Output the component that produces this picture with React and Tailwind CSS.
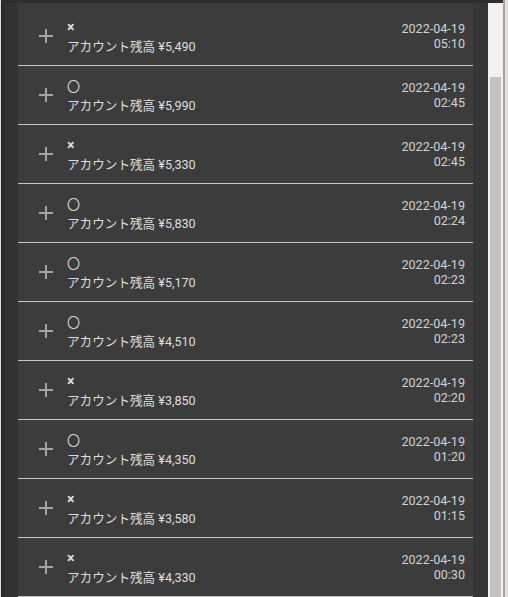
import React from 'react';

const rows = [
  { mark: '×', balance: '5,490', date: '2022-04-19', time: '05:10' },
  { mark: '〇', balance: '5,990', date: '2022-04-19', time: '02:45' },
  { mark: '×', balance: '5,330', date: '2022-04-19', time: '02:45' },
  { mark: '〇', balance: '5,830', date: '2022-04-19', time: '02:24' },
  { mark: '〇', balance: '5,170', date: '2022-04-19', time: '02:23' },
  { mark: '〇', balance: '4,510', date: '2022-04-19', time: '02:23' },
  { mark: '×', balance: '3,850', date: '2022-04-19', time: '02:20' },
  { mark: '〇', balance: '4,350', date: '2022-04-19', time: '01:20' },
  { mark: '×', balance: '3,580', date: '2022-04-19', time: '01:15' },
  { mark: '×', balance: '4,330', date: '2022-04-19', time: '00:30' },
];

const PlusIcon = () => (
  <svg width="16" height="16" viewBox="0 0 16 16" className="shrink-0">
    <path d="M8 1v14M1 8h14" stroke="#a4a4a4" strokeWidth="2" />
  </svg>
);

const Row = ({ row, first }) => (
  <div
    className={`flex items-center border-b border-[#c4c4c4] pl-5 pr-2 ${
      first ? 'h-[63px] pt-[4px]' : 'h-[59px]'
    }`}
  >
    <PlusIcon />
    <div className="ml-[13px] flex flex-col pt-[2px] leading-[19.5px] text-[#dedede]">
      <span className={row.mark === '×' ? 'text-[14px] font-bold' : 'text-[13px]'}>{row.mark}</span>
      <span>アカウント残高 ¥{row.balance}</span>
    </div>
    <div className="ml-auto flex flex-col items-end pt-[1px] leading-[14.5px] text-[#d2d2d2]">
      <span>{row.date}</span>
      <span>{row.time}</span>
    </div>
  </div>
);

export default function App() {
  return (
    <div
      className="flex h-[597px] w-[508px] overflow-hidden bg-[#2e2e2e] text-[12.6px]"
      style={{ fontFamily: "Roboto, 'Noto Sans CJK JP', sans-serif" }}
    >
      <div className="w-px bg-[#e2ddd9]" />
      <div className="flex flex-1 pt-[3px]">
        <div className="w-[3px] bg-[#2a2a2a]" />
        <div className="w-[14px] bg-[#323232]" />
        <div className="w-[455px] bg-[#3c3c3c]">
          {rows.map((row, i) => (
            <Row key={i} row={row} first={i === 0} />
          ))}
        </div>
        <div className="w-[15px] bg-[#363636]" />
      </div>
      <div className="flex w-[15px] flex-col bg-[#2e2e2e] pt-[3px]">
        <div className="flex flex-1 flex-col bg-[#f1f1f1] pt-[74px]">
          <div className="mx-[2px] flex-1 bg-[#c1c1c1]" />
        </div>
      </div>
      <div className="w-[2px] bg-[#a9a4a2]" />
      <div className="w-[3px] bg-[#e6e1dd]" />
    </div>
  );
}
